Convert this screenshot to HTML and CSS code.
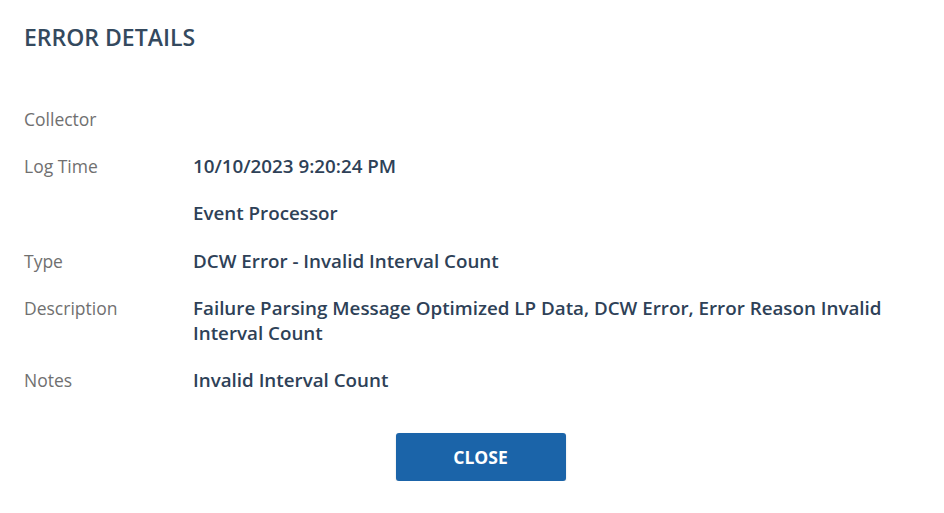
FILE: index.html
```html
<!DOCTYPE html>
<html lang="en">
<head>
<meta charset="utf-8">
<title>Error Details</title>
<link rel="stylesheet" href="styles.css">
</head>
<body>
<div class="dialog">
  <h2 class="title">ERROR DETAILS</h2>
  <div class="details">
    <div class="label">Collector</div><div class="value"></div>
    <div class="label">Log Time</div><div class="value">10/10/2023 9:20:24 PM</div>
    <div class="label"></div><div class="value">Event Processor</div>
    <div class="label">Type</div><div class="value">DCW Error - Invalid Interval Count</div>
    <div class="label">Description</div><div class="value">Failure Parsing Message Optimized LP Data, DCW Error, Error Reason Invalid Interval Count</div>
    <div class="label">Notes</div><div class="value">Invalid Interval Count</div>
  </div>
  <div class="actions">
    <button class="btn-close" type="button">CLOSE</button>
  </div>
</div>
</body>
</html>
```

FILE: styles.css
```css
html, body {
  margin: 0;
  padding: 0;
  background: #ffffff;
}
body {
  font-family: "Open Sans", "Liberation Sans", sans-serif;
}
.dialog {
  width: 944px;
  box-sizing: border-box;
  padding: 22px 24px 0 24px;
}
.title {
  margin: 0;
  font-size: 23px;
  line-height: 30px;
  font-weight: 600;
  color: #34495e;
}
.details {
  margin-top: 55px;
  display: grid;
  grid-template-columns: 169px 1fr;
  row-gap: 22.2px;
  width: 880px;
}
.label {
  font-size: 17.5px;
  line-height: 25px;
  color: #707070;
  min-height: 25px;
}
.value {
  font-size: 18.8px;
  line-height: 25px;
  font-weight: 600;
  color: #2e4157;
  min-height: 25px;
}
.actions {
  display: flex;
  justify-content: center;
  margin-top: 40.5px;
  padding-left: 17px;
}
.btn-close {
  width: 170px;
  height: 48px;
  background: #1b64a9;
  color: #ffffff;
  border: none;
  border-radius: 3px;
  font-family: "Open Sans", "Liberation Sans", sans-serif;
  font-size: 17.5px;
  font-weight: 700;
  box-shadow: 0 1px 2px rgba(0,0,0,0.15);
}
```
